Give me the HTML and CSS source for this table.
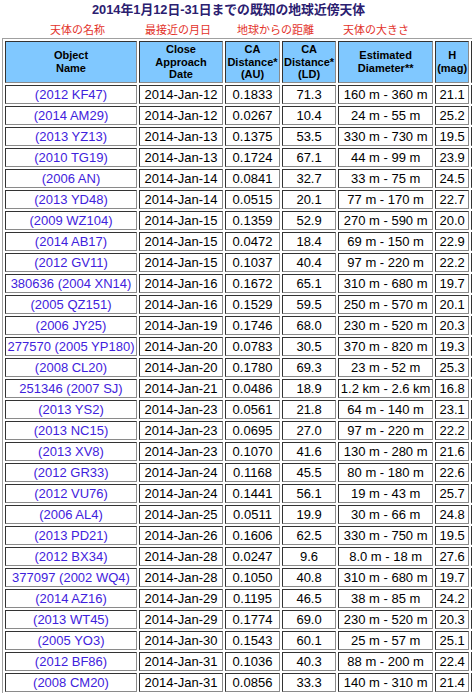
FILE: index.html
```html
<!DOCTYPE html>
<html lang="ja">
<head>
<meta charset="utf-8">
<title>2014年1月12日-31日までの既知の地球近傍天体</title>
<link rel="stylesheet" href="styles.css">
</head>
<body>
<div class="page">
<div class="title">2014年1月12日-31日までの既知の地球近傍天体</div>
<div class="labels">
  <span>天体の名称</span>
  <span>最接近の月日</span>
  <span>地球からの距離</span>
  <span>天体の大きさ</span>
</div>
<table class="neo">
  <thead>
    <tr>
      <th class="c1">Object<br>Name</th>
      <th class="c2">Close<br>Approach<br>Date</th>
      <th class="c3">CA<br>Distance*<br>(AU)</th>
      <th class="c4">CA<br>Distance*<br>(LD)</th>
      <th class="c5">Estimated<br>Diameter**</th>
      <th class="c6">H<br>(mag)</th>
      <th class="c7"></th>
    </tr>
  </thead>
  <tbody>
    <tr><td><a href="#">(2012 KF47)</a></td><td>2014-Jan-12</td><td>0.1833</td><td>71.3</td><td>160 m - 360 m</td><td>21.1</td><td></td></tr>
    <tr><td><a href="#">(2014 AM29)</a></td><td>2014-Jan-12</td><td>0.0267</td><td>10.4</td><td>24 m - 55 m</td><td>25.2</td><td></td></tr>
    <tr><td><a href="#">(2013 YZ13)</a></td><td>2014-Jan-13</td><td>0.1375</td><td>53.5</td><td>330 m - 730 m</td><td>19.5</td><td></td></tr>
    <tr><td><a href="#">(2010 TG19)</a></td><td>2014-Jan-13</td><td>0.1724</td><td>67.1</td><td>44 m - 99 m</td><td>23.9</td><td></td></tr>
    <tr><td><a href="#">(2006 AN)</a></td><td>2014-Jan-14</td><td>0.0841</td><td>32.7</td><td>33 m - 75 m</td><td>24.5</td><td></td></tr>
    <tr><td><a href="#">(2013 YD48)</a></td><td>2014-Jan-14</td><td>0.0515</td><td>20.1</td><td>77 m - 170 m</td><td>22.7</td><td></td></tr>
    <tr><td><a href="#">(2009 WZ104)</a></td><td>2014-Jan-15</td><td>0.1359</td><td>52.9</td><td>270 m - 590 m</td><td>20.0</td><td></td></tr>
    <tr><td><a href="#">(2014 AB17)</a></td><td>2014-Jan-15</td><td>0.0472</td><td>18.4</td><td>69 m - 150 m</td><td>22.9</td><td></td></tr>
    <tr><td><a href="#">(2012 GV11)</a></td><td>2014-Jan-15</td><td>0.1037</td><td>40.4</td><td>97 m - 220 m</td><td>22.2</td><td></td></tr>
    <tr><td><a href="#">380636 (2004 XN14)</a></td><td>2014-Jan-16</td><td>0.1672</td><td>65.1</td><td>310 m - 680 m</td><td>19.7</td><td></td></tr>
    <tr><td><a href="#">(2005 QZ151)</a></td><td>2014-Jan-16</td><td>0.1529</td><td>59.5</td><td>250 m - 570 m</td><td>20.1</td><td></td></tr>
    <tr><td><a href="#">(2006 JY25)</a></td><td>2014-Jan-19</td><td>0.1746</td><td>68.0</td><td>230 m - 520 m</td><td>20.3</td><td></td></tr>
    <tr><td><a href="#">277570 (2005 YP180)</a></td><td>2014-Jan-20</td><td>0.0783</td><td>30.5</td><td>370 m - 820 m</td><td>19.3</td><td></td></tr>
    <tr><td><a href="#">(2008 CL20)</a></td><td>2014-Jan-20</td><td>0.1780</td><td>69.3</td><td>23 m - 52 m</td><td>25.3</td><td></td></tr>
    <tr><td><a href="#">251346 (2007 SJ)</a></td><td>2014-Jan-21</td><td>0.0486</td><td>18.9</td><td>1.2 km - 2.6 km</td><td>16.8</td><td></td></tr>
    <tr><td><a href="#">(2013 YS2)</a></td><td>2014-Jan-23</td><td>0.0561</td><td>21.8</td><td>64 m - 140 m</td><td>23.1</td><td></td></tr>
    <tr><td><a href="#">(2013 NC15)</a></td><td>2014-Jan-23</td><td>0.0695</td><td>27.0</td><td>97 m - 220 m</td><td>22.2</td><td></td></tr>
    <tr><td><a href="#">(2013 XV8)</a></td><td>2014-Jan-23</td><td>0.1070</td><td>41.6</td><td>130 m - 280 m</td><td>21.6</td><td></td></tr>
    <tr><td><a href="#">(2012 GR33)</a></td><td>2014-Jan-24</td><td>0.1168</td><td>45.5</td><td>80 m - 180 m</td><td>22.6</td><td></td></tr>
    <tr><td><a href="#">(2012 VU76)</a></td><td>2014-Jan-24</td><td>0.1441</td><td>56.1</td><td>19 m - 43 m</td><td>25.7</td><td></td></tr>
    <tr><td><a href="#">(2006 AL4)</a></td><td>2014-Jan-25</td><td>0.0511</td><td>19.9</td><td>30 m - 66 m</td><td>24.8</td><td></td></tr>
    <tr><td><a href="#">(2013 PD21)</a></td><td>2014-Jan-26</td><td>0.1606</td><td>62.5</td><td>330 m - 750 m</td><td>19.5</td><td></td></tr>
    <tr><td><a href="#">(2012 BX34)</a></td><td>2014-Jan-28</td><td>0.0247</td><td>9.6</td><td>8.0 m - 18 m</td><td>27.6</td><td></td></tr>
    <tr><td><a href="#">377097 (2002 WQ4)</a></td><td>2014-Jan-28</td><td>0.1050</td><td>40.8</td><td>310 m - 680 m</td><td>19.7</td><td></td></tr>
    <tr><td><a href="#">(2014 AZ16)</a></td><td>2014-Jan-29</td><td>0.1195</td><td>46.5</td><td>38 m - 85 m</td><td>24.2</td><td></td></tr>
    <tr><td><a href="#">(2013 WT45)</a></td><td>2014-Jan-29</td><td>0.1774</td><td>69.0</td><td>230 m - 520 m</td><td>20.3</td><td></td></tr>
    <tr><td><a href="#">(2005 YO3)</a></td><td>2014-Jan-30</td><td>0.1543</td><td>60.1</td><td>25 m - 57 m</td><td>25.1</td><td></td></tr>
    <tr><td><a href="#">(2012 BF86)</a></td><td>2014-Jan-31</td><td>0.1036</td><td>40.3</td><td>88 m - 200 m</td><td>22.4</td><td></td></tr>
    <tr><td><a href="#">(2008 CM20)</a></td><td>2014-Jan-31</td><td>0.0856</td><td>33.3</td><td>140 m - 310 m</td><td>21.4</td><td></td></tr>
  </tbody>
</table>
</div>
</body>
</html>
```

FILE: styles.css
```css
html {
  overflow: hidden;
}

body {
  margin: 0;
  background: #ffffff;
  font-family: "Liberation Sans", Arial, sans-serif;
  color: #000;
}

.page {
  width: 640px;
}

.title {
  height: 20px;
  line-height: 20px;
  padding-left: 92px;
  font-family: "Liberation Sans", "Noto Sans CJK JP", sans-serif;
  font-size: 12.8px;
  font-weight: bold;
  color: #2b2070;
  white-space: nowrap;
}

.labels {
  display: grid;
  grid-template-columns: 95px 92px 106px auto;
  height: 18px;
  line-height: 18px;
  padding-left: 50px;
  font-family: "Noto Sans CJK JP", sans-serif;
  font-size: 11px;
  color: #e3322a;
  white-space: nowrap;
}

.neo {
  margin-left: 2px;
  border-collapse: separate;
  border-spacing: 2px;
  border: 1px solid;
  border-color: #a0a0a0 #555555 #555555 #a0a0a0;
  white-space: nowrap;
}

.neo th,
.neo td {
  padding: 1px;
  border: 1px solid;
  border-color: #333333 #8a8a8a #8a8a8a #333333;
  text-align: center;
}

.neo th {
  background: #80c8ff;
  font-size: 11px;
  font-weight: bold;
  line-height: 12.67px;
}

.neo td {
  font-size: 13px;
  line-height: 15px;
}

.neo a {
  color: #3f22dc;
  text-decoration: none;
}

.c1 { width: 128px; }
.c2 { width: 80px; }
.c3 { width: 51px; }
.c4 { width: 50px; }
.c5 { width: 91px; }
.c6 { width: 28px; }
.c7 { width: 76px; }
```
